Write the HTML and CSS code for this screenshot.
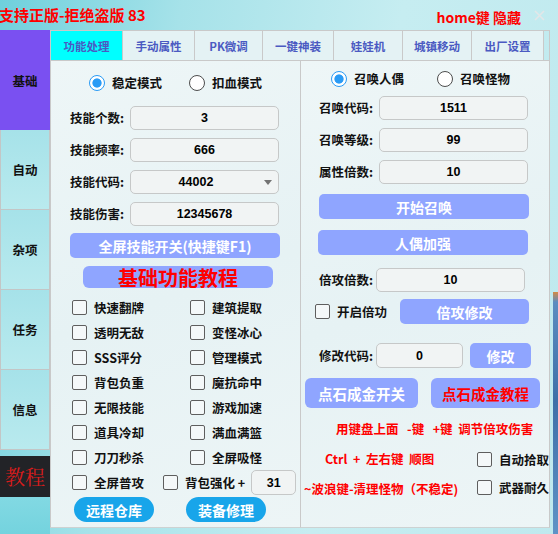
FILE: index.html
```html
<!DOCTYPE html>
<html lang="zh-CN">
<head>
<meta charset="utf-8">
<title>UI</title>
<link rel="stylesheet" href="styles.css">
</head>
<body>
<div class="app">
  <header class="top">
    <div class="title">支持正版-拒绝盗版 83</div>
    <div class="hide">home键 隐藏</div>
    <svg class="close" width="11" height="11" viewBox="0 0 11 11"><path d="M1 1L10 10M10 1L1 10" stroke="#e2e7e8" stroke-width="1.6" fill="none"/></svg>
  </header>
  <div class="main">
    <nav class="side">
      <div class="sbtn active">基础</div>
      <div class="sbtn">自动</div>
      <div class="sbtn">杂项</div>
      <div class="sbtn">任务</div>
      <div class="sbtn">信息</div>
      <div class="sbtn tut">教程</div>
      <div class="side-fill"></div>
    </nav>
    <section class="content">
      <div class="tabs">
        <div class="tab on">功能处理</div>
        <div class="tab">手动属性</div>
        <div class="tab">PK微调</div>
        <div class="tab">一键神装</div>
        <div class="tab">娃娃机</div>
        <div class="tab">城镇移动</div>
        <div class="tab">出厂设置</div>
        <div class="tab-fill"></div>
      </div>
      <div class="panels">
        <div class="panel left">
          <div class="radios l">
            <div class="radio"><span class="rd on"></span>稳定模式</div>
            <div class="radio"><span class="rd"></span>扣血模式</div>
          </div>
          <div class="form l">
            <div class="frow"><span class="lbl">技能个数:</span><div class="inp">3</div></div>
            <div class="frow"><span class="lbl">技能频率:</span><div class="inp">666</div></div>
            <div class="frow"><span class="lbl">技能代码:</span><div class="inp sel">44002<span class="arrow"></span></div></div>
            <div class="frow"><span class="lbl">技能伤害:</span><div class="inp">12345678</div></div>
          </div>
          <div class="btn f1">全屏技能开关(快捷键F1)</div>
          <div class="btn tutorial">基础功能教程</div>
          <div class="checks">
            <div class="chk"><span class="box"></span>快速翻牌</div>
            <div class="chk"><span class="box"></span>建筑提取</div>
            <div class="chk"><span class="box"></span>透明无敌</div>
            <div class="chk"><span class="box"></span>变怪冰心</div>
            <div class="chk"><span class="box"></span>SSS评分</div>
            <div class="chk"><span class="box"></span>管理模式</div>
            <div class="chk"><span class="box"></span>背包负重</div>
            <div class="chk"><span class="box"></span>魔抗命中</div>
            <div class="chk"><span class="box"></span>无限技能</div>
            <div class="chk"><span class="box"></span>游戏加速</div>
            <div class="chk"><span class="box"></span>道具冷却</div>
            <div class="chk"><span class="box"></span>满血满篮</div>
            <div class="chk"><span class="box"></span>刀刀秒杀</div>
            <div class="chk"><span class="box"></span>全屏吸怪</div>
          </div>
          <div class="lastrow">
            <div class="chk first"><span class="box"></span>全屏普攻</div>
            <div class="chk"><span class="box"></span>背包强化 +</div>
            <div class="inp small">31</div>
          </div>
          <div class="pills">
            <div class="pill">远程仓库</div>
            <div class="pill">装备修理</div>
          </div>
        </div>
        <div class="panel right">
          <div class="radios r">
            <div class="radio"><span class="rd on"></span>召唤人偶</div>
            <div class="radio"><span class="rd"></span>召唤怪物</div>
          </div>
          <div class="form r">
            <div class="frow"><span class="lbl">召唤代码:</span><div class="inp">1511</div></div>
            <div class="frow"><span class="lbl">召唤等级:</span><div class="inp">99</div></div>
            <div class="frow"><span class="lbl">属性倍数:</span><div class="inp">10</div></div>
          </div>
          <div class="btn wide w1">开始召唤</div>
          <div class="btn wide w2">人偶加强</div>
          <div class="frow bei"><span class="lbl short">倍攻倍数:</span><div class="inp">10</div></div>
          <div class="kq">
            <div class="chk"><span class="box"></span>开启倍功</div>
            <div class="btn bgx">倍攻修改</div>
          </div>
          <div class="frow xg"><span class="lbl short">修改代码:</span><div class="inp mid">0</div><div class="btn sm">修改</div></div>
          <div class="ds">
            <div class="btn ds1">点石成金开关</div>
            <div class="btn ds2">点石成金教程</div>
          </div>
          <div class="hint h1">用键盘上面&nbsp;&nbsp;&nbsp;-键&nbsp;&nbsp;&nbsp;+键&nbsp;&nbsp;调节倍攻伤害</div>
          <div class="hrow r2">
            <div class="hint h2">Ctrl&nbsp;&nbsp;+&nbsp;&nbsp;左右键&nbsp;&nbsp;顺图</div>
            <div class="chk"><span class="box"></span>自动拾取</div>
          </div>
          <div class="hrow r3">
            <div class="hint h3">~波浪键-清理怪物（不稳定)</div>
            <div class="chk"><span class="box"></span>武器耐久</div>
          </div>
        </div>
      </div>
    </section>
    <div class="edge"><div class="edge-img"></div></div>
  </div>
</div>
</body>
</html>
```
FILE: styles.css
```css
* { box-sizing: border-box; margin: 0; padding: 0; }
html, body { width: 558px; height: 534px; overflow: hidden; }
body {
  font-family: "Noto Sans CJK SC", "Noto Sans", sans-serif;
  font-weight: 700;
  color: #111;
  background: linear-gradient(100deg, #6fd0dc 0%, #a6e2e9 28%, #c6edf1 62%, #bfe9ee 100%);
}
.app { width: 558px; height: 534px; display: flex; flex-direction: column; }

.top { height: 30px; display: flex; align-items: center; flex: none; }
.title { color: #ff0000; font-size: 15px; line-height: 30px; margin-left: -1px; white-space: nowrap; }
.hide { margin-left: auto; color: #ff0000; font-size: 14px; line-height: 30px; margin-top: 3px; }
.close { display: block; flex: none; margin: 0 13px 0 13px; }

.main { display: flex; height: 504px; }

.side { width: 50px; flex: none; display: flex; flex-direction: column; }
.sbtn {
  height: 80px; flex: none;
  display: flex; align-items: center; justify-content: center;
  font-size: 12.5px;
  background: linear-gradient(#a6e2e9, #b9eaee);
  border: 1px solid #c3c6c6; border-top: none;
}
.sbtn.active { height: 100px; background: #7a50f1; border: none; }
.sbtn.tut {
  height: 41px; margin-top: 6px; border: none;
  background: #222327; color: #d81c1c;
  font-family: "Noto Serif CJK SC", "Noto Sans CJK SC", serif;
  font-weight: 400; font-size: 20px;
}
.side-fill { flex: 1; background: linear-gradient(#82d9e3, #74d3de); }

.content { width: 500px; flex: none; display: flex; flex-direction: column; }
.tabs { height: 31px; display: flex; border-top: 1px solid #c9c9c9; border-bottom: 1px solid #c9c9c9; }
.tab {
  border-left: 1px solid #c9c9c9;
  background: #e4f2f4; color: #4b5ac2;
  font-size: 11.5px;
  display: flex; align-items: center; justify-content: center;
}
.tab.on { background: #00ffff; }
.tab:nth-child(1) { width: 72px; }
.tab:nth-child(2) { width: 72px; }
.tab:nth-child(3) { width: 68px; }
.tab:nth-child(4) { width: 71px; }
.tab:nth-child(5) { width: 69px; }
.tab:nth-child(6) { width: 69px; }
.tab:nth-child(7) { width: 73px; border-right: 1px solid #c9c9c9; }
.tab-fill { flex: 1; border-right: 1px solid #c9c9c9; }

.panels { display: flex; height: 467px; }
.panel {
  height: 467px;
  border-bottom: 1px solid #cdd2d2;
  background: linear-gradient(160deg, #eef6f7 0%, #e6f2f4 50%, #edf5f6 100%);
  display: flex; flex-direction: column;
}
.left { width: 251px; border-left: 1px solid #c9c9c9; border-right: 1px solid #c9c9c9; }
.right { width: 249px; border-right: 1px solid #c9c9c9; }

.radios { display: flex; align-items: center; height: 18px; }
.radios.l { margin-top: 13px; padding-left: 38px; gap: 27px; }
.radios.r { margin-top: 9px; padding-left: 30px; gap: 33px; }
.radio { display: flex; align-items: center; font-size: 12.5px; line-height: 18px; }
.rd {
  width: 16px; height: 16px; flex: none; border-radius: 50%;
  border: 1px solid #4d4d4d; background: #fff; margin-right: 7px;
}
.rd.on { border-color: #2a9bf5; background: radial-gradient(circle, #2a9bf5 0 4.2px, #fff 5px); }

.form { display: flex; flex-direction: column; gap: 8px; }
.form.l { margin-top: 14px; padding-left: 19px; }
.form.r { margin-top: 8px; padding-left: 18px; }
.frow { display: flex; align-items: center; height: 24px; }
.lbl { font-size: 12.5px; width: 60px; flex: none; line-height: 24px; white-space: nowrap; }
.lbl.short { width: 57px; }
.inp {
  position: relative;
  width: 149px; height: 24px; flex: none;
  border: 1px solid #c6c8c8; border-radius: 5px; background: #f1f4f4;
  display: flex; align-items: center; justify-content: center;
  font-family: "Liberation Sans", sans-serif; font-weight: 700; font-size: 12.5px; color: #000;
}
.inp.sel { padding-right: 17px; }
.arrow {
  position: absolute; right: 6px; top: 9px;
  width: 0; height: 0;
  border-left: 4.5px solid transparent; border-right: 4.5px solid transparent;
  border-top: 5px solid #737373;
}

.btn {
  display: flex; align-items: center; justify-content: center;
  height: 25px; flex: none;
  background: #8fa5ff; color: #fff;
  font-size: 14px; border-radius: 5px; white-space: nowrap;
}
.f1 { margin: 7px 0 0 19px; width: 210px; }
.tutorial { margin: 8px 0 0 32px; width: 190px; height: 22px; color: #ff0000; font-size: 20px; border-radius: 6px; }

.checks { margin-top: 7px; padding-left: 21px; display: grid; grid-template-columns: 118px auto; grid-auto-rows: 25px; }
.chk { display: flex; align-items: center; font-size: 12.5px; white-space: nowrap; }
.box {
  width: 15px; height: 15px; flex: none;
  border: 1px solid #5e5e5e; border-radius: 2px; background: #f4f8f9;
  margin-right: 7px;
}
.lastrow { display: flex; align-items: center; height: 25px; padding-left: 21px; }
.lastrow .first { width: 91px; }
.inp.small { width: 45px; height: 25px; margin-left: 6px; }

.pills { display: flex; gap: 32px; margin-top: 2px; padding-left: 23px; }
.pill {
  width: 80px; height: 25px; border-radius: 13px;
  background: #18a5ea; color: #fff; font-size: 14px;
  display: flex; align-items: center; justify-content: center;
}

.wide { width: 210px; }
.w1 { margin: 10px 0 0 18px; }
.w2 { margin: 11px 0 0 17px; }
.frow.bei { margin-top: 13px; padding-left: 18px; }
.kq { display: flex; align-items: center; height: 25px; margin-top: 7px; padding-left: 14px; }
.kq .chk { width: 85px; }
.bgx { width: 129px; margin-left: 0; }
.frow.xg { margin-top: 19px; padding-left: 18px; height: 25px; }
.inp.mid { width: 87px; height: 25px; }
.sm { width: 61px; margin-left: 7px; }
.ds { display: flex; margin-top: 10px; padding-left: 4px; gap: 13px; }
.ds .btn { height: 30px; border-radius: 6px; font-size: 14.5px; }
.ds1 { width: 113px; }
.ds2 { width: 109px; color: #ff0000; }

.hint { color: #ff0000; font-size: 12.5px; line-height: 20px; white-space: nowrap; }
.h1 { height: 20px; margin-top: 11px; padding-left: 35px; }
.hrow { display: flex; align-items: center; height: 20px; margin-top: 10px; }
.hrow .chk { margin-left: auto; width: 72px; }
.h2 { padding-left: 24px; }
.h3 { padding-left: 3px; }
.r3 .chk { margin-top: -4px; }

.edge { flex: 1; display: flex; padding-left: 3px; }
.edge-img {
  flex: 1; margin-top: 262px;
  background: linear-gradient(#d48a44 0, #5b8cc0 10px, #3e6fa8 45%, #5f93c6 100%);
}
```
